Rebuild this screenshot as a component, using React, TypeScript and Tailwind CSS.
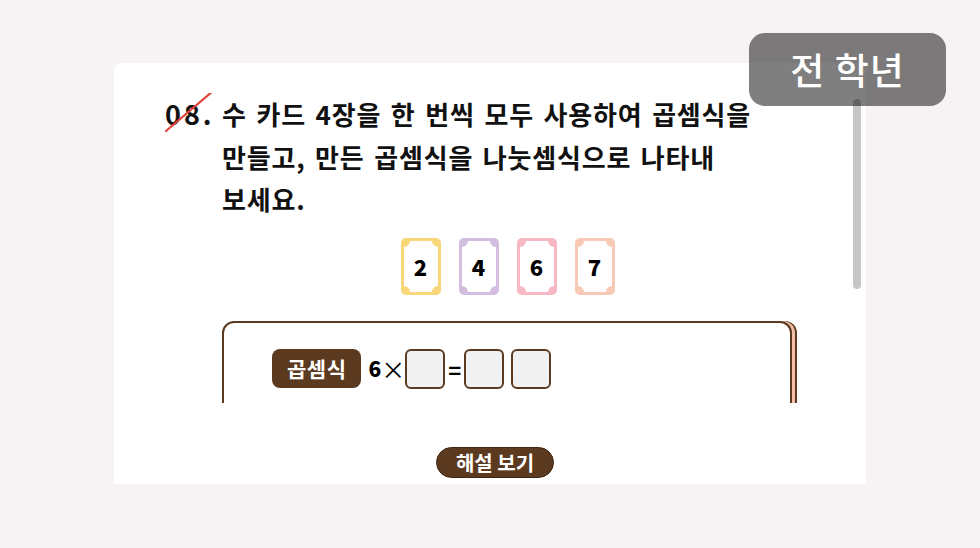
import React from 'react';

const font = { fontFamily: '"Noto Sans CJK KR", "Noto Sans", sans-serif' };

const cards = [
    { n: '2', color: '#f8d77b' },
    { n: '4', color: '#d3bedf' },
    { n: '6', color: '#f6b9c4' },
    { n: '7', color: '#f8cab5' },
];

const NumberCard = ({ n, color }: { n: string; color: string }) => (
    <div className="relative w-10 h-[57px] flex items-center justify-center">
        <svg className="absolute inset-0" width="40" height="57" viewBox="0 0 40 57">
            <rect x="0" y="0" width="40" height="57" rx="5" fill={color} />
            <path
                d="M 9 3 H 31 A 6 6 0 0 0 37 9 V 48 A 6 6 0 0 0 31 54 H 9 A 6 6 0 0 0 3 48 V 9 A 6 6 0 0 0 9 3 Z"
                fill="#ffffff"
            />
        </svg>
        <span className="relative text-[22px] font-black text-black leading-none">{n}</span>
    </div>
);

const AnswerBox = () => (
    <div className="w-10 h-10 rounded-md border-2 border-[#5b3a20] bg-[#f1f1f1]" />
);

export default function App() {
    return (
        <div className="min-h-[548px] w-[980px] bg-[#f7f3f4] relative" style={font}>
            <div className="pt-[63px] pl-[114px]">
                <div className="w-[752px] h-[421px] bg-white rounded-tl-lg flex flex-col relative">
                    {/* scroll area */}
                    <div className="h-[340px] overflow-hidden relative">
                        <div className="pt-[30px] pl-[51px] flex">
                            <div className="relative w-[57px] text-[27px] font-bold leading-[42px] text-[#111] tracking-[3px]">
                                08.
                                <svg className="absolute left-0 top-0" width="50" height="42" viewBox="0 0 50 42">
                                    <line x1="1" y1="38" x2="48" y2="-2" stroke="#e2443a" strokeWidth="2.2" strokeLinecap="round" />
                                </svg>
                            </div>
                            <p className="w-[600px] text-[26px] font-bold leading-[42.5px] text-[#111] tracking-[0.8px] [word-spacing:3px]">
                                수 카드 4장을 한 번씩 모두 사용하여 곱셈식을
                                <br />
                                만들고, 만든 곱셈식을 나눗셈식으로 나타내
                                <br />
                                보세요.
                            </p>
                        </div>

                        <div className="mt-[17px] flex justify-center gap-[18px] pl-[35px]">
                            {cards.map(c => (
                                <NumberCard key={c.n} n={c.n} color={c.color} />
                            ))}
                        </div>

                        <div className="mt-[26px] ml-[108px] w-[570px] h-[120px] rounded-tl-xl rounded-tr-xl border-2 border-[#5b3a20] shadow-[3px_0_0_#f4c0a8,5px_0_0_#5b3a20] pt-[26px] pl-[48px]">
                            <div className="flex items-center">
                                <span className="h-[39px] px-[15px] rounded-lg bg-[#5b3a20] text-white text-[21px] font-bold flex items-center tracking-[0.5px]">
                                    곱셈식
                                </span>
                                <span className="ml-[7px] text-[21px] font-black text-black">6</span>
                                <span className="text-[24px] text-black leading-none">×</span>
                                <AnswerBox />
                                <span className="mx-[3px] text-[22px] font-bold text-black leading-none">=</span>
                                <AnswerBox />
                                <div className="w-[7px]" />
                                <AnswerBox />
                            </div>
                        </div>
                    </div>

                    {/* footer */}
                    <div className="flex justify-center pt-[44px] pl-[10px]">
                        <button className="h-[31px] w-[118px] rounded-full bg-[#5b3a20] border border-[#3e2612] text-white text-[20px] font-bold leading-none flex items-center justify-center">
                            해설 보기
                        </button>
                    </div>

                    {/* scrollbar thumb */}
                    <div className="absolute left-[739px] top-[36px] w-[8px] h-[190px] rounded-full bg-[#c6c6c6]" />
                </div>
            </div>

            {/* grade badge */}
            <div className="absolute left-[749px] top-[33px] w-[197px] h-[73px] rounded-[16px] bg-black/50 flex items-center justify-center">
                <span className="text-white text-[37px] font-medium tracking-[1px]">전 학년</span>
            </div>
        </div>
    );
}
